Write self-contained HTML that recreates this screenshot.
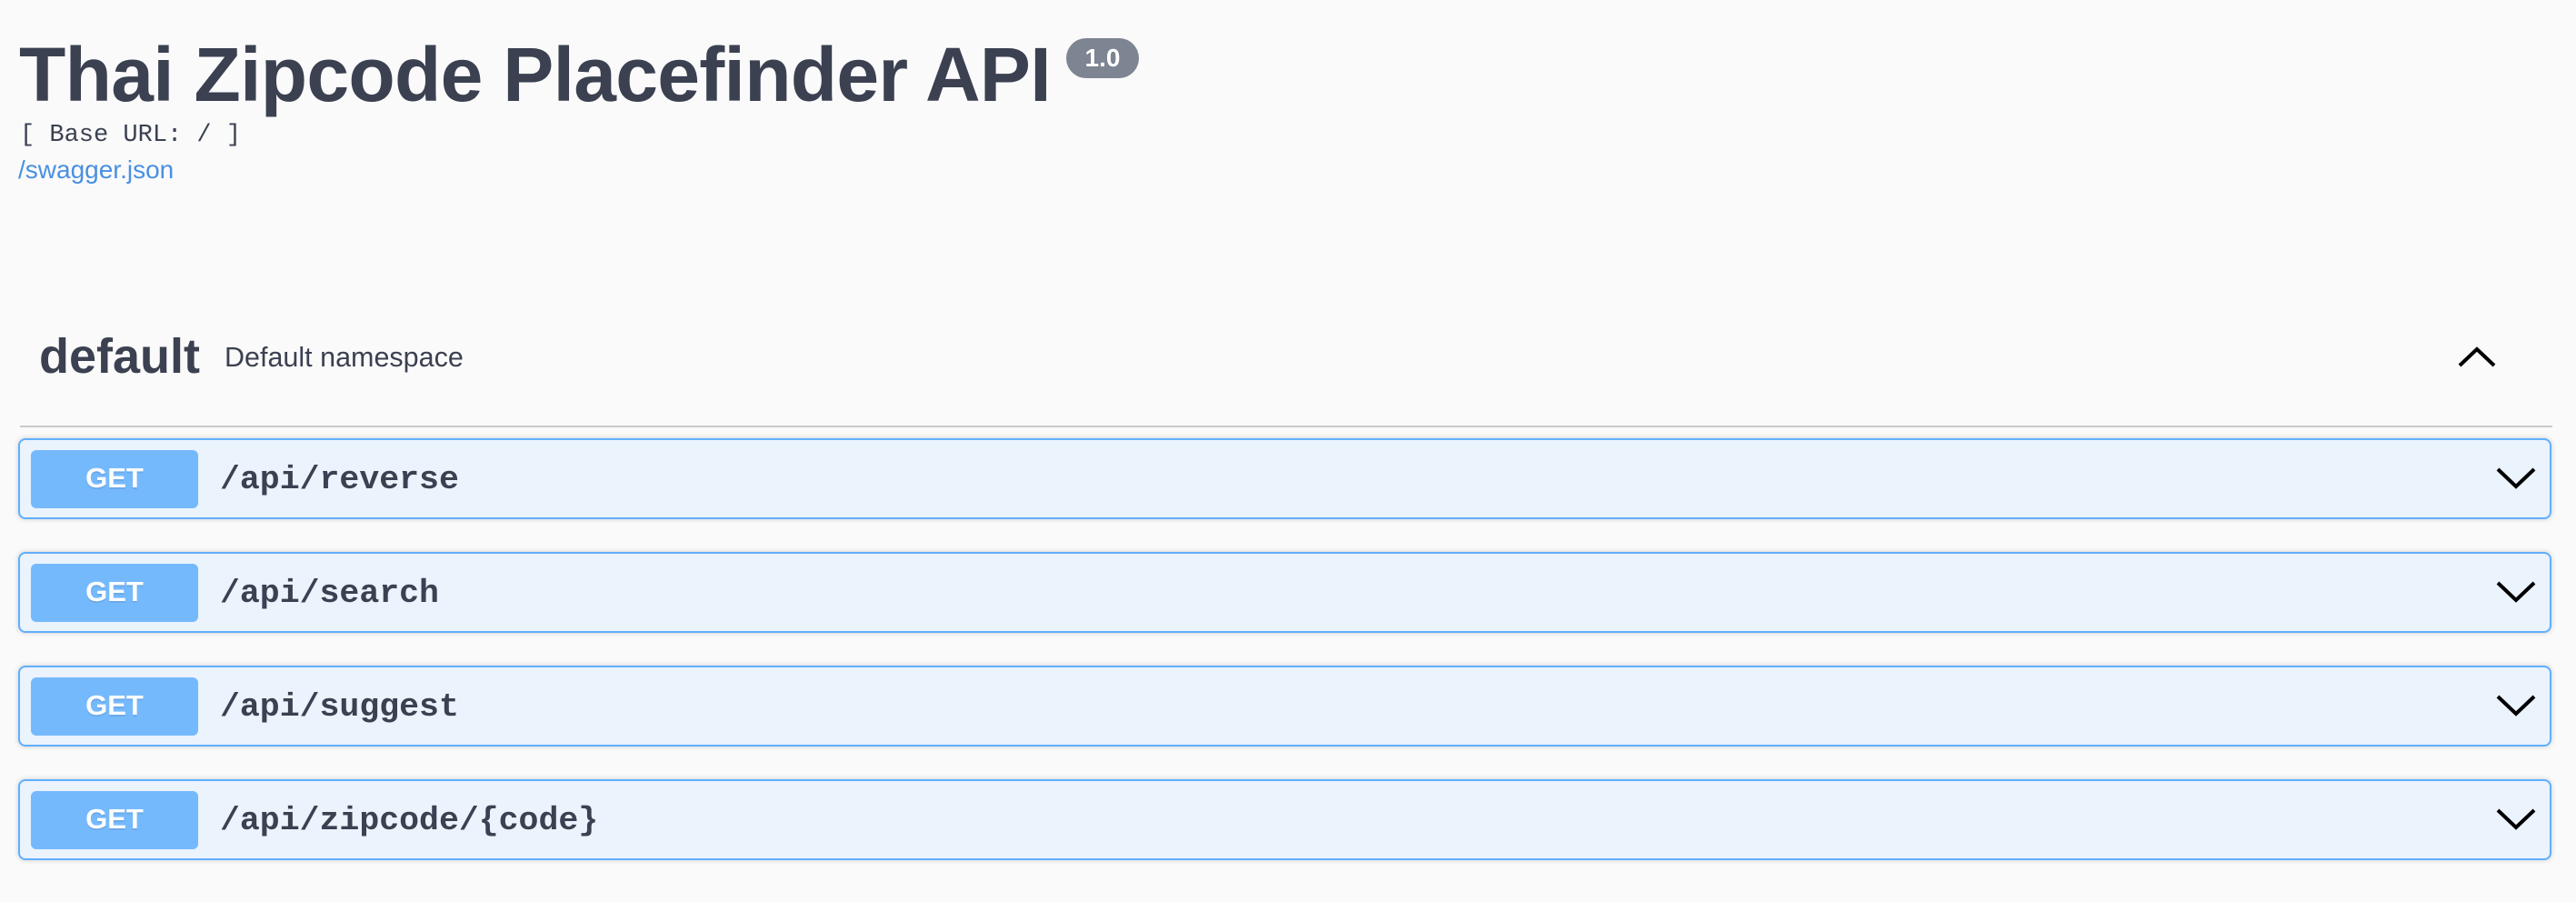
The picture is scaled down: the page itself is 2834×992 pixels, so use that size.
<!DOCTYPE html>
<html><head><meta charset="utf-8"><style>
html,body{margin:0;padding:0;width:2834px;height:992px;background:#fafafa;overflow:hidden;font-family:"Liberation Sans",Arial,sans-serif;color:#3b4151}
.a{position:absolute;white-space:nowrap}
.title{left:21px;top:32px;font-size:84px;font-weight:700;line-height:100px;letter-spacing:-0.7px}
.badge{left:1173px;top:42px;width:80px;height:44px;border-radius:22px;background:#7d8492;color:#fff;font-size:28px;font-weight:700;text-align:center;line-height:44px}
.base{left:22px;top:134px;font-family:"Liberation Mono",monospace;font-size:27px;line-height:30px}
.link{left:20px;top:171px;font-size:28px;line-height:32px;color:#4990e2}
.def{left:43px;top:362px;font-size:54px;font-weight:700;line-height:60px}
.ns{left:247px;top:376px;font-size:30.5px;line-height:34px}
.hr{left:22px;top:468px;width:2786px;height:2px;background:#c9cacf}
.op{left:20px;width:2783px;height:85px;border:2px solid #61affe;border-radius:8px;background:#ebf3fd;box-shadow:0 0 6px rgba(0,0,0,.19)}
.m{position:absolute;left:12px;top:11px;width:184px;height:64px;border-radius:6px;background:#61affe;opacity:.85;color:#fff;font-weight:700;font-size:31px;line-height:62px;text-align:center;text-shadow:0 2px 0 rgba(0,0,0,.1)}
.p{position:absolute;left:220px;top:22px;font-family:"Liberation Mono",monospace;font-weight:700;font-size:36.5px;line-height:44px;color:#3b4151}
.c{position:absolute;right:12px;top:26px}
</style></head><body>
<div class="a title">Thai Zipcode Placefinder API</div>
<div class="a badge">1.0</div>
<div class="a base">[ Base URL: / ]</div>
<div class="a link">/swagger.json</div>
<div class="a def">default</div>
<div class="a ns">Default namespace</div>
<svg class="a" style="left:2700px;top:372px" width="50" height="40"><path d="M6 30 L25 12 L44 30" fill="none" stroke="#000" stroke-width="4"/></svg>
<div class="a hr"></div>
<div class="a op" style="top:482px"><div class="m">GET</div><div class="p">/api/reverse</div><svg class="c" width="50" height="36"><path d="M5 6 L25 25 L45 6" fill="none" stroke="#000" stroke-width="4"/></svg></div>
<div class="a op" style="top:607px"><div class="m">GET</div><div class="p">/api/search</div><svg class="c" width="50" height="36"><path d="M5 6 L25 25 L45 6" fill="none" stroke="#000" stroke-width="4"/></svg></div>
<div class="a op" style="top:732px"><div class="m">GET</div><div class="p">/api/suggest</div><svg class="c" width="50" height="36"><path d="M5 6 L25 25 L45 6" fill="none" stroke="#000" stroke-width="4"/></svg></div>
<div class="a op" style="top:857px"><div class="m">GET</div><div class="p">/api/zipcode/{code}</div><svg class="c" width="50" height="36"><path d="M5 6 L25 25 L45 6" fill="none" stroke="#000" stroke-width="4"/></svg></div>
</body></html>
